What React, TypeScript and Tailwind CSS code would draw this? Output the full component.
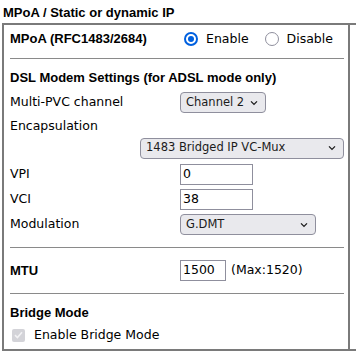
import React from "react";

const Chevron = () => (
  <svg width="10" height="6" viewBox="0 0 10 6" className="shrink-0">
    <path d="M2 1.4 L5 4.4 L8 1.4" fill="none" stroke="#1b1b1b" strokeWidth="1.3" />
  </svg>
);

const Select = ({ value, className }: { value: string; className: string }) => (
  <div
    className={`flex items-center justify-between h-[21px] rounded-[4px] border border-[#8f8f9d] bg-[#e9e9ed] pl-[5px] pr-[6px] text-[11.5px] text-[#1b1b1b] whitespace-nowrap ${className}`}
  >
    <span>{value}</span>
    <Chevron />
  </div>
);

const TextInput = ({ value, className }: { value: string; className: string }) => (
  <div
    className={`flex items-center h-[21px] border border-[#8f8f9d] bg-white pl-[2px] text-[12.5px] text-black ${className}`}
  >
    {value}
  </div>
);

const bold = "font-bold text-[13px] font-['Liberation_Sans',sans-serif]";

const Row = ({ label, isBold, children }: { label: string; isBold?: boolean; children?: React.ReactNode }) => (
  <div className="flex items-center h-[25px]">
    <div className={`w-[170px] shrink-0 ${isBold ? bold : ""}`}>{label}</div>
    <div className="flex items-center">{children}</div>
  </div>
);

const Hr = ({ className }: { className: string }) => (
  <div className={`h-px bg-[#8a8a8a] mr-[2px] ${className}`} />
);

export default function App() {
  return (
    <div className="w-[356px] h-[359px] overflow-hidden bg-white text-black font-['DejaVu_Sans',sans-serif] text-[12.5px]">
      <div className={`h-[23px] pl-[3px] pt-[3px] ${bold}`}>MPoA / Static or dynamic IP</div>
      <div className="flex ml-[2px]">
        <div className="w-[348px] shrink-0 border-2 border-[#7a7a7a] pl-[6px] pr-[2px] h-[328px]">
          <div className="flex items-center h-[28px]">
            <div className={`w-[170px] shrink-0 ${bold}`}>MPoA (RFC1483/2684)</div>
            <div className="flex items-center">
              <span className="w-[14px] h-[14px] rounded-full border-2 border-[#0060df] flex items-center justify-center ml-[4px]">
                <span className="w-[6px] h-[6px] rounded-full bg-[#0060df]" />
              </span>
              <span className="ml-[8px]">Enable</span>
              <span className="w-[14px] h-[14px] rounded-full border border-[#8f8f9d] ml-[16px]" />
              <span className="ml-[8px]">Disable</span>
            </div>
          </div>
          <Hr className="mt-[5px]" />
          <div className={`h-[22px] mt-[8px] flex items-center ${bold}`}>
            DSL Modem Settings (for ADSL mode only)
          </div>
          <div className="mt-px">
            <Row label="Multi-PVC channel">
              <Select value="Channel 2" className="w-[86px]" />
            </Row>
          </div>
          <div className="h-[22px] flex items-center">Encapsulation</div>
          <div className="flex items-center h-[22px]">
            <Select value="1483 Bridged IP VC-Mux" className="w-[204px] ml-[130px]" />
          </div>
          <div className="mt-[3px]">
            <Row label="VPI">
              <TextInput value="0" className="w-[73px]" />
            </Row>
            <Row label="VCI">
              <TextInput value="38" className="w-[73px]" />
            </Row>
            <Row label="Modulation">
              <Select value="G.DMT" className="w-[136px]" />
            </Row>
          </div>
          <Hr className="mt-[10px]" />
          <div className="mt-[10px]">
            <Row label="MTU" isBold>
              <TextInput value="1500" className="w-[46px]" />
              <span className="ml-[5px]">(Max:1520)</span>
            </Row>
          </div>
          <Hr className="mt-[10px]" />
          <div className={`h-[20px] mt-[9px] flex items-center ${bold}`}>Bridge Mode</div>
          <div className="flex items-center h-[24px]">
            <span className="w-[13px] h-[13px] rounded-[2px] bg-[#d3d3d8] flex items-center justify-center ml-[2px]">
              <svg width="9" height="8" viewBox="0 0 9 8">
                <path d="M1 4.2 L3.4 6.5 L8 1.2" fill="none" stroke="#f2f2f4" strokeWidth="1.6" />
              </svg>
            </span>
            <span className="ml-[9px]">Enable Bridge Mode</span>
          </div>
        </div>
        <div className="flex-1 border-y-2 border-[#7a7a7a] h-[328px]" />
      </div>
    </div>
  );
}
